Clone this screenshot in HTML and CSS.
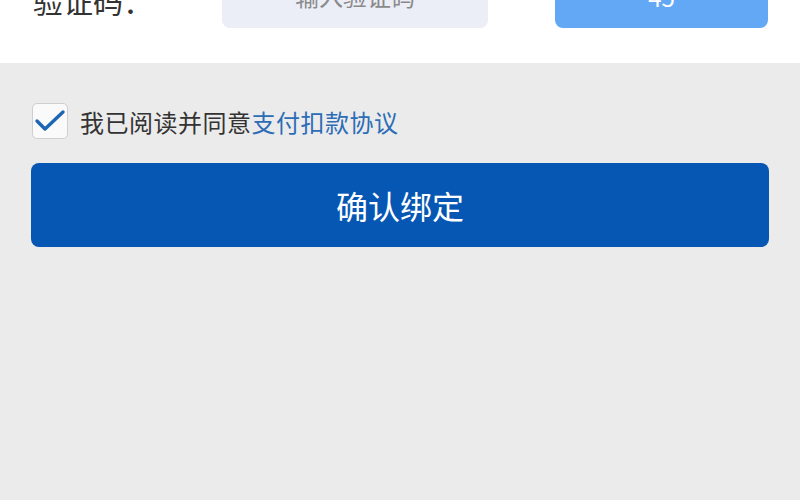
FILE: index.html
```html
<!DOCTYPE html>
<html lang="zh-CN">
<head>
  <meta charset="UTF-8">
  <title>绑定银行卡</title>
  <link rel="stylesheet" href="styles.css">
</head>
<body>

  <div class="form-top">
    <div class="code-row">
      <label class="code-label">验证码：</label>
      <input class="code-input" placeholder="输入验证码">
      <button class="code-btn">45</button>
    </div>
  </div>

  <div class="agree-row">
    <span class="check">
      <svg width="32" height="26" viewBox="0 0 32 26">
        <path d="M3 13 L11 21 L29 4" fill="none" stroke="#1d66b4" stroke-width="3.4" stroke-linecap="round" stroke-linejoin="round"/>
      </svg>
    </span>
    <span class="agree-text">我已阅读并同意<a class="agree-link">支付扣款协议</a></span>
  </div>

  <button class="confirm-btn">确认绑定</button>

</body>
</html>
```

FILE: styles.css
```css
body { margin: 0; background: #ebebeb; font-family: "Noto Sans CJK SC", "Noto Sans", sans-serif; overflow: hidden; }
.form-top { background: #fff; height: 63px; overflow: hidden; }
.code-row { display: flex; align-items: center; height: 56px; margin-top: -28px; padding: 0 32px 0 33px; }
.code-label { width: 189px; font-size: 30px; color: #333; }
.code-input { width: 266px; height: 56px; box-sizing: border-box; border: none; border-radius: 8px; background: #ebedf7; font-size: 24px; text-align: center; font-family: inherit; padding: 0 0 10px; }
.code-input::placeholder { color: #8a8a8a; }
.code-btn { margin-left: auto; width: 213px; height: 56px; border: none; border-radius: 8px; background: #62a8f5; color: #fff; font-size: 24px; font-family: inherit; padding: 0 0 8px; }
.agree-row { display: flex; align-items: center; gap: 12px; padding: 40px 32px 0; }
.check { width: 36px; height: 36px; box-sizing: border-box; border: 1px solid #cfcfcf; border-radius: 5px; background: #fafafa; display: flex; align-items: center; justify-content: center; }
.agree-text { font-size: 24px; color: #333; letter-spacing: 0.5px; }
.agree-link { color: #2c6db6; }
.confirm-btn { display: block; margin: 24px 31px 0; width: 738px; height: 84px; border: none; border-radius: 8px; background: #0657b3; color: #fff; font-size: 32px; font-family: inherit; }
```
